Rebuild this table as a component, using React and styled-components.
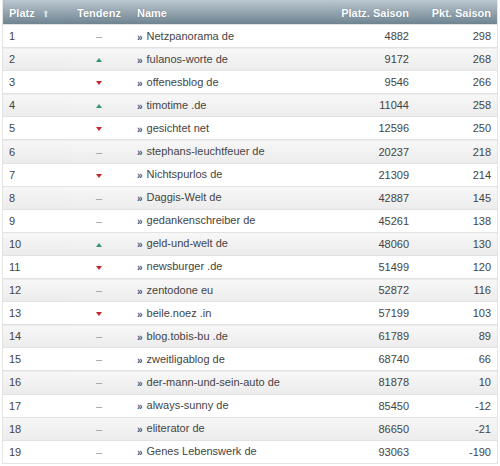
import React from "react";
import styled, { createGlobalStyle } from "styled-components";

const GlobalStyle = createGlobalStyle`
  body {
    margin: 0;
    background: #fff;
    font-family: "Liberation Sans", Arial, sans-serif;
  }
`;

const rows = [
  [1, "same", "Netzpanorama de", 4882, 298],
  [2, "up", "fulanos-worte de", 9172, 268],
  [3, "down", "offenesblog de", 9546, 266],
  [4, "up", "timotime .de", 11044, 258],
  [5, "down", "gesichtet net", 12596, 250],
  [6, "same", "stephans-leuchtfeuer de", 20237, 218],
  [7, "down", "Nichtspurlos de", 21309, 214],
  [8, "same", "Daggis-Welt de", 42887, 145],
  [9, "same", "gedankenschreiber de", 45261, 138],
  [10, "up", "geld-und-welt de", 48060, 130],
  [11, "down", "newsburger .de", 51499, 120],
  [12, "same", "zentodone eu", 52872, 116],
  [13, "down", "beile.noez .in", 57199, 103],
  [14, "same", "blog.tobis-bu .de", 61789, 89],
  [15, "same", "zweitligablog de", 68740, 66],
  [16, "same", "der-mann-und-sein-auto de", 81878, 10],
  [17, "same", "always-sunny de", 85450, -12],
  [18, "same", "eliterator de", 86650, -21],
  [19, "same", "Genes Lebenswerk de", 93063, -190],
];

const Wrapper = styled.div`
  padding: 0 2px;
`;

const Table = styled.table`
  width: 496px;
  border-collapse: collapse;
  font-size: 11px;
  color: #444;
  border: 1px solid #e4e4e4;
  border-top: none;
`;

const HeadCell = styled.th`
  height: 23px;
  padding: 1px 6px 0;
  text-align: ${p => p.align || "left"};
  width: ${p => p.w}px;
  color: #fff;
  font-weight: bold;
  font-size: 11px;
  text-shadow: 0 0 1px rgba(60, 80, 95, 0.6);
  background: linear-gradient(#bcc8d0, #6e8391);
  white-space: nowrap;
`;

const SortIcon = styled.span`
  display: inline-block;
  margin-left: 7px;
  color: #d6dde2;
  font-size: 9px;
`;

const Row = styled.tr`
  background: ${p => (p.odd ? "#fff" : "linear-gradient(#f7f7f7, #ececec)")};
  border-top: 1px solid #e2e2e2;
`;

const Cell = styled.td`
  height: 22.1px;
  padding: 0 6px;
  text-align: ${p => p.align || "left"};
  white-space: nowrap;
`;

const Dash = styled.span`
  color: #999;
`;

const Tri = styled.span`
  display: inline-block;
  width: 0;
  height: 0;
  border-left: 3px solid transparent;
  border-right: 3px solid transparent;
  ${p =>
    p.dir === "up"
      ? "border-bottom: 4px solid #2f9a6e; vertical-align: 1px;"
      : "border-top: 4px solid #c62828; vertical-align: 1px;"}
`;

const Chevron = styled.span`
  display: inline-block;
  color: #2d5c8a;
  font-weight: bold;
  font-size: 10px;
  margin-right: 4px;
  vertical-align: -1px;
`;

function Trend({ t }) {
  if (t === "same") return <Dash>–</Dash>;
  return <Tri dir={t} />;
}

export default function App() {
  return (
    <Wrapper>
      <GlobalStyle />
      <Table>
        <thead>
          <tr>
            <HeadCell w={52}>
              Platz<SortIcon>⬆</SortIcon>
            </HeadCell>
            <HeadCell w={52} align="center">Tendenz</HeadCell>
            <HeadCell>Name</HeadCell>
            <HeadCell w={70} align="right">Platz. Saison</HeadCell>
            <HeadCell w={70} align="right">Pkt. Saison</HeadCell>
          </tr>
        </thead>
        <tbody>
          {rows.map(([place, trend, name, seasonPlace, points]) => (
            <Row key={place} odd={place % 2 === 1}>
              <Cell>{place}</Cell>
              <Cell align="center">
                <Trend t={trend} />
              </Cell>
              <Cell>
                <Chevron>»</Chevron>
                {name}
              </Cell>
              <Cell align="right">{seasonPlace}</Cell>
              <Cell align="right">{points}</Cell>
            </Row>
          ))}
        </tbody>
      </Table>
    </Wrapper>
  );
}
